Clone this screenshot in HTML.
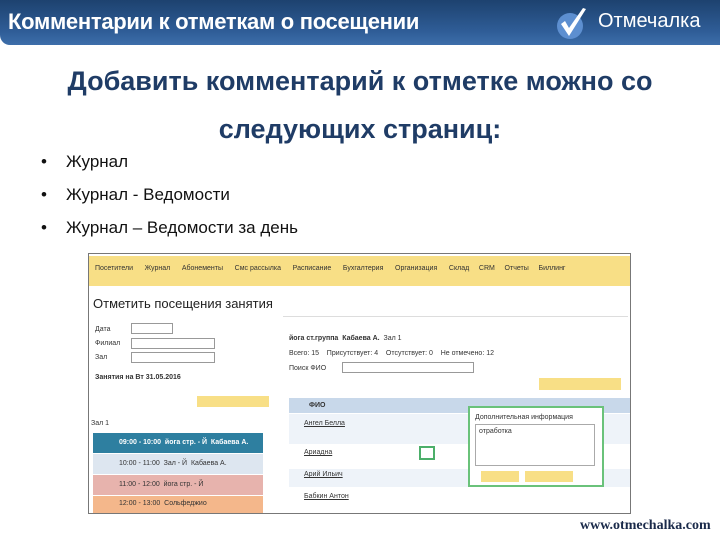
<!DOCTYPE html>
<html><head><meta charset="utf-8"><style>
*{margin:0;padding:0;box-sizing:border-box}
body{width:720px;height:540px;background:#fff;position:relative;overflow:hidden;font-family:"Liberation Sans","DejaVu Sans",sans-serif}
.hdr{position:absolute;left:0;top:0;width:720px;height:45px;background:linear-gradient(#1d426f,#2f5d97 70%,#3d6eaa);border-bottom-left-radius:10px}
.hdr .t{position:absolute;left:8px;top:9px;color:#fff;font-size:22px;font-weight:bold;letter-spacing:-0.3px;white-space:nowrap}
.hdr .b{position:absolute;left:598px;top:10px;color:#fff;font-size:20px;white-space:nowrap}
h1{position:absolute;left:0;width:720px;text-align:center;color:#1f3c66;font-size:27px;font-weight:bold;white-space:nowrap}
.li{position:absolute;left:42px;font-size:17px;color:#111}
.li:before{content:"•";position:absolute;left:-1px}
.li span{position:absolute;left:24px;white-space:nowrap}
.a{position:absolute;font-size:7px;color:#333;white-space:nowrap}
.sh{position:absolute;left:88px;top:253px;width:543px;height:261px;border:1px solid #777;background:#fff;overflow:hidden}
</style></head><body>
<div class="hdr"><div class="t">Комментарии к отметкам о посещении</div>
<svg style="position:absolute;left:556px;top:6px" width="34" height="36" viewBox="0 0 34 36"><circle cx="14" cy="20" r="13" fill="#5d8fd0"/><path d="M5 18 L13 30 L30 3 L27 2 L13 22 L9 15 Z" fill="#fff"/></svg>
<div class="b">Отмечалка</div></div>
<h1 style="top:66px">Добавить комментарий к отметке можно со</h1>
<h1 style="top:114px">следующих страниц:</h1>
<div class="li" style="top:152px"><span>Журнал</span></div>
<div class="li" style="top:185px"><span>Журнал - Ведомости</span></div>
<div class="li" style="top:218px"><span>Журнал – Ведомости за день</span></div>
<div class="sh">
<div style="position:absolute;left:0;top:2px;width:543px;height:30px;background:#f8df86"></div>
<div class="a" style="left:6px;top:11px">Посетители &nbsp;&nbsp;&nbsp;&nbsp; Журнал &nbsp;&nbsp;&nbsp;&nbsp; Абонементы &nbsp;&nbsp;&nbsp;&nbsp; Смс рассылка &nbsp;&nbsp;&nbsp;&nbsp; Расписание &nbsp;&nbsp;&nbsp;&nbsp; Бухгалтерия &nbsp;&nbsp;&nbsp;&nbsp; Организация &nbsp;&nbsp;&nbsp;&nbsp; Склад &nbsp;&nbsp;&nbsp; CRM &nbsp;&nbsp;&nbsp; Отчеты &nbsp;&nbsp;&nbsp; Биллинг</div>
<div style="position:absolute;left:4px;top:42px;font-size:13px;color:#222">Отметить посещения занятия</div>
<div class="a" style="left:6px;top:72px">Дата</div><div style="position:absolute;left:42px;top:69px;width:42px;height:11px;border:1px solid #999"></div>
<div class="a" style="left:6px;top:86px">Филиал</div><div style="position:absolute;left:42px;top:84px;width:84px;height:11px;border:1px solid #999"></div>
<div class="a" style="left:6px;top:100px">Зал</div><div style="position:absolute;left:42px;top:98px;width:84px;height:11px;border:1px solid #999"></div>
<div class="a" style="left:6px;top:120px;font-weight:bold">Занятия на Вт 31.05.2016</div>
<div style="position:absolute;left:108px;top:142px;width:72px;height:11px;background:#f8df86"></div>
<div class="a" style="left:2px;top:166px">Зал 1</div>
<div style="position:absolute;left:4px;top:179px;width:170px;height:20px;background:#2e7fa0"></div>
<div class="a" style="left:30px;top:185px;color:#fff;font-weight:bold">09:00 - 10:00 &nbsp;йога стр. - Й &nbsp;Кабаева А.</div>
<div style="position:absolute;left:4px;top:200px;width:170px;height:20px;background:#dde6f0"></div>
<div class="a" style="left:30px;top:206px">10:00 - 11:00 &nbsp;Зал - Й &nbsp;Кабаева А.</div>
<div style="position:absolute;left:4px;top:221px;width:170px;height:20px;background:#e7b3ad"></div>
<div class="a" style="left:30px;top:227px">11:00 - 12:00 &nbsp;йога стр. - Й</div>
<div style="position:absolute;left:4px;top:242px;width:170px;height:20px;background:#f4b78b"></div>
<div class="a" style="left:30px;top:246px">12:00 - 13:00 &nbsp;Сольфеджио</div>
<div style="position:absolute;left:194px;top:62px;width:345px;height:1px;background:#ddd"></div>
<div class="a" style="left:200px;top:81px"><b>йога ст.группа</b> &nbsp;<b>Кабаева А.</b> &nbsp;Зал 1</div>
<div class="a" style="left:200px;top:96px">Всего: 15 &nbsp;&nbsp; Присутствует: 4 &nbsp;&nbsp; Отсутствует: 0 &nbsp;&nbsp; Не отмечено: 12</div>
<div class="a" style="left:200px;top:111px">Поиск ФИО</div><div style="position:absolute;left:253px;top:108px;width:132px;height:11px;border:1px solid #999"></div>
<div style="position:absolute;left:450px;top:124px;width:82px;height:12px;background:#f8df86"></div>
<div style="position:absolute;left:200px;top:144px;width:343px;height:15px;background:#c8d8ea"></div>
<div class="a" style="left:220px;top:148px;font-weight:bold">ФИО</div>
<div style="position:absolute;left:200px;top:160px;width:343px;height:30px;background:#eef3f9"></div>
<div style="position:absolute;left:200px;top:215px;width:343px;height:18px;background:#eef3f9"></div>
<div class="a" style="left:215px;top:166px;text-decoration:underline">Ангел Белла</div>
<div class="a" style="left:215px;top:195px;text-decoration:underline">Ариадна</div>
<div class="a" style="left:215px;top:217px;text-decoration:underline">Арий Ильич</div>
<div class="a" style="left:215px;top:239px;text-decoration:underline">Бабкин Антон</div>
<div style="position:absolute;left:330px;top:192px;width:16px;height:14px;border:2px solid #4caf6a"></div>
<div style="position:absolute;left:379px;top:152px;width:136px;height:81px;border:2px solid #6ac27a;background:#fff"></div>
<div class="a" style="left:386px;top:160px">Дополнительная информация</div>
<div style="position:absolute;left:386px;top:170px;width:120px;height:42px;border:1px solid #aaa"></div>
<div class="a" style="left:390px;top:174px">отработка</div>
<div style="position:absolute;left:392px;top:217px;width:38px;height:11px;background:#f8df86"></div>
<div style="position:absolute;left:436px;top:217px;width:48px;height:11px;background:#f8df86"></div>
</div>
<div style="position:absolute;left:580px;top:518px;font-family:'Liberation Serif',serif;font-size:14px;font-weight:bold;color:#1a2a4a;white-space:nowrap">www.otmechalka.com</div>
</body></html>
